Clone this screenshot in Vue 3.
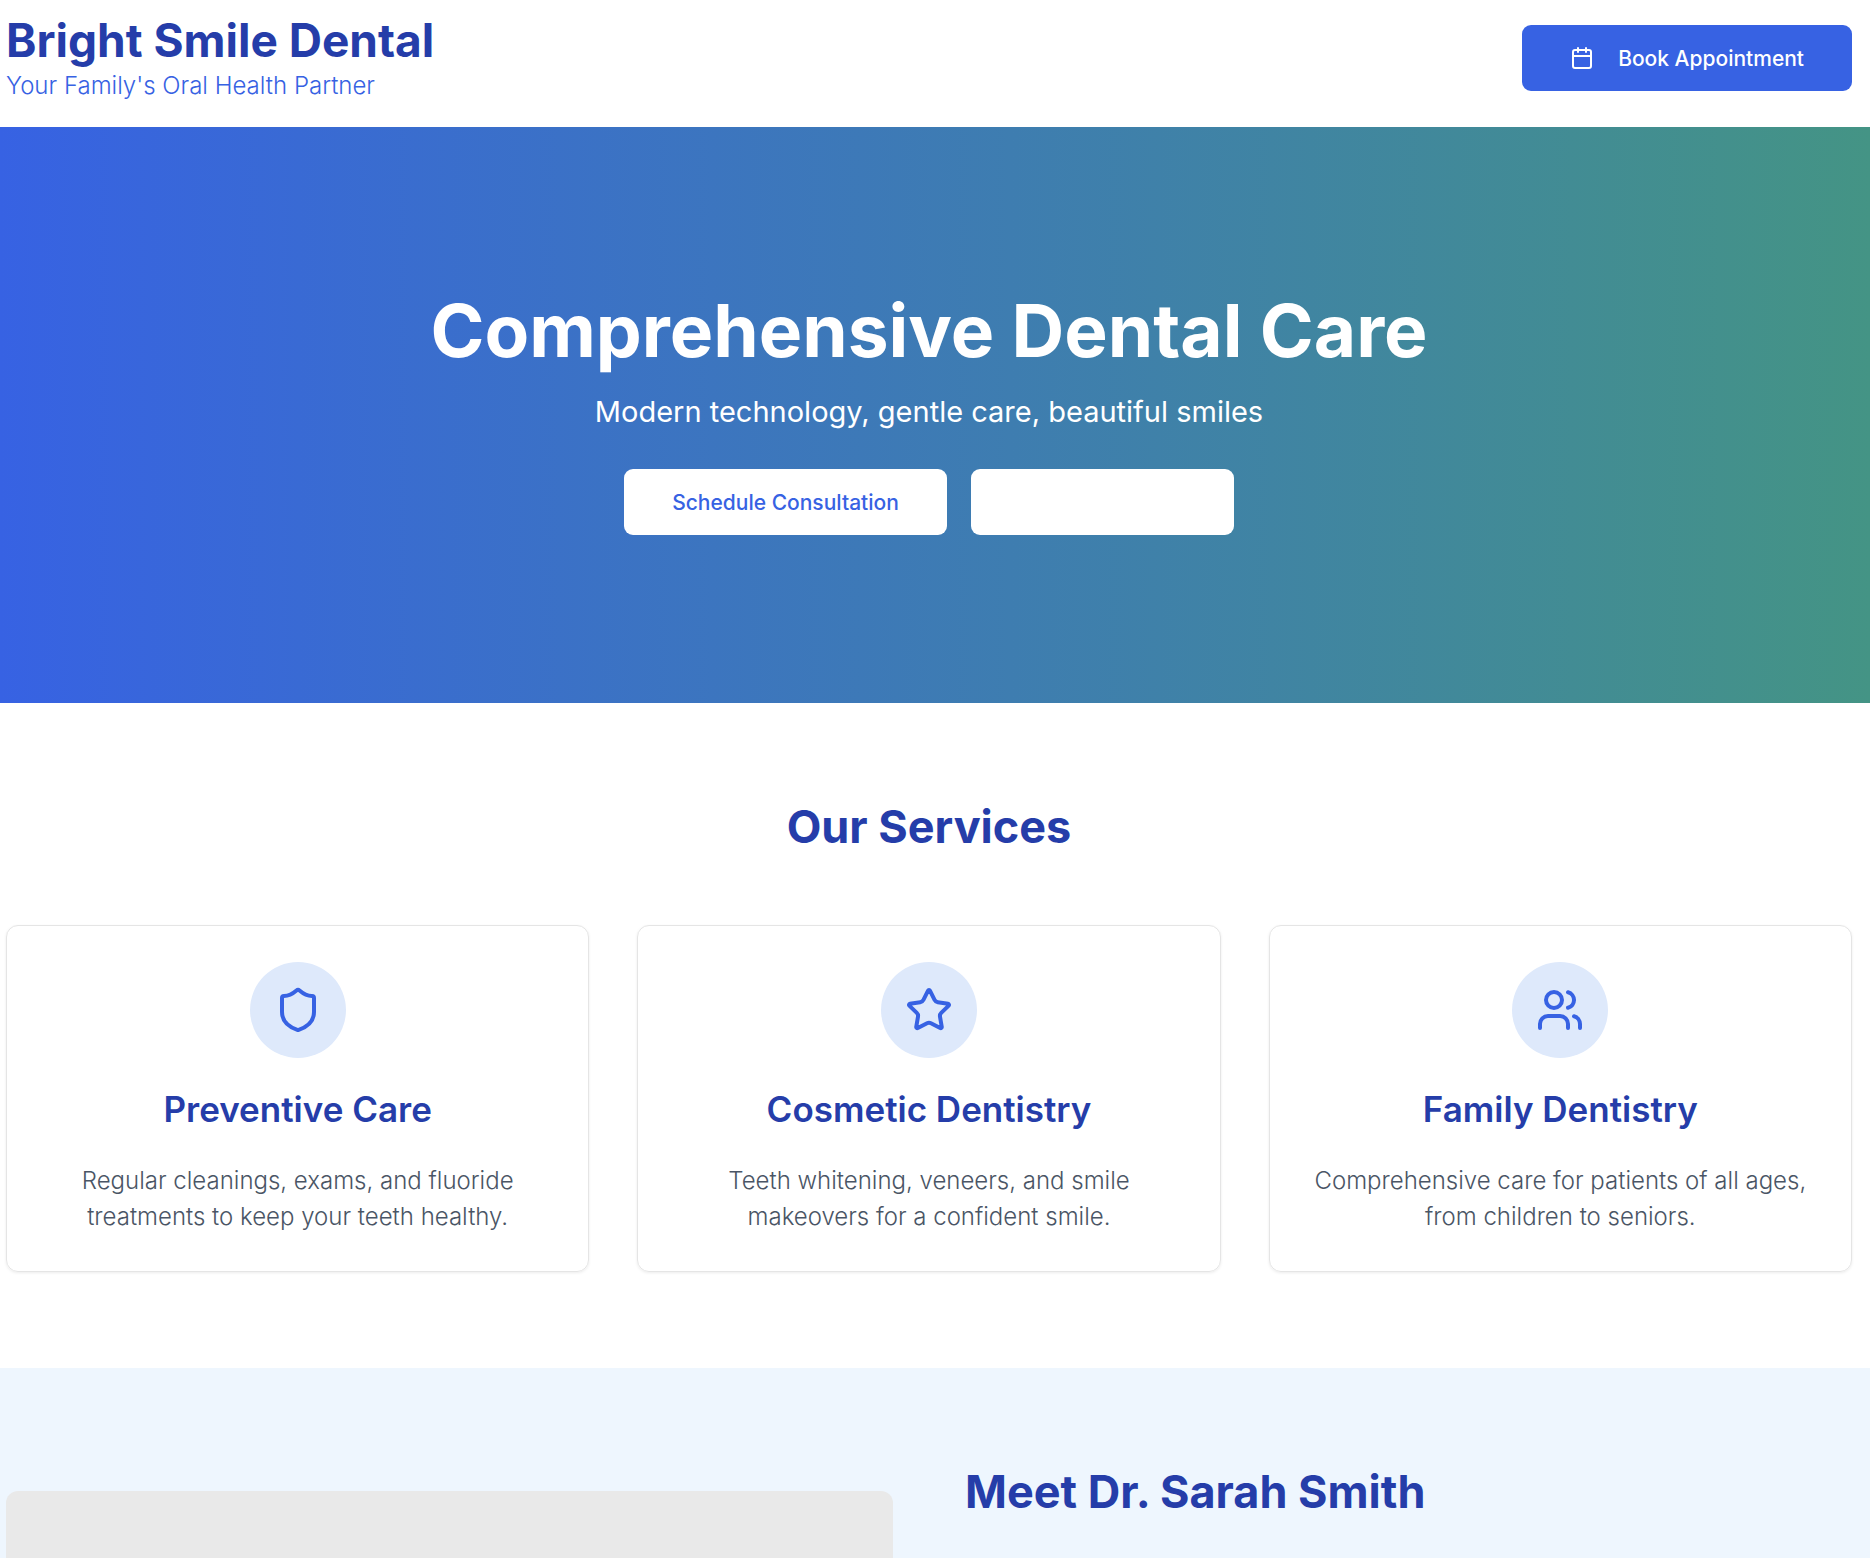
<script setup>
    import {ref} from 'vue';

    const services = ref([
        {
            icon: 'shield',
            title: 'Preventive Care',
            desc: 'Regular cleanings, exams, and fluoride treatments to keep your teeth healthy.'
        },
        {
            icon: 'star',
            title: 'Cosmetic Dentistry',
            desc: 'Teeth whitening, veneers, and smile makeovers for a confident smile.'
        },
        {
            icon: 'users',
            title: 'Family Dentistry',
            desc: 'Comprehensive care for patients of all ages, from children to seniors.'
        }
    ]);
</script>
<template>
    <div class="page">
        <header class="header wrap flex">
            <div class="brand">
                <h1 class="heading">Bright Smile Dental</h1>
                <p>Your Family's Oral Health Partner</p>
            </div>
            <button class="btn btn-primary flex center">
                <svg class="icon" width="24" height="24" viewBox="0 0 24 24" aria-hidden="true">
                    <path d="M8 2v4M16 2v4" />
                    <rect x="3" y="4" width="18" height="18" rx="2" />
                    <path d="M3 10h18" />
                </svg>
                Book Appointment
            </button>
        </header>
        <main>
            <section class="hero wrap flex center">
                <h2>Comprehensive Dental Care</h2>
                <p>Modern technology, gentle care, beautiful smiles</p>
                <div class="hero-buttons flex">
                    <button class="btn btn-white">Schedule Consultation</button>
                    <button class="btn btn-white btn-blank" aria-label="Call"></button>
                </div>
            </section>
            <section class="services wrap">
                <h2 class="heading">Our Services</h2>
                <div class="cards">
                    <article v-for="service in services" :key="service.title" class="card">
                        <div class="card-icon flex center">
                            <svg class="icon" width="48" height="48" viewBox="0 0 24 24" aria-hidden="true">
                                <path v-if="service.icon === 'shield'" d="M20 13c0 5-3.5 7.5-7.66 8.95a1 1 0 0 1-.67-.01C7.5 20.5 4 18 4 13V6a1 1 0 0 1 1-1c2 0 4.5-1.2 6.24-2.72a1.17 1.17 0 0 1 1.52 0C14.51 3.81 17 5 19 5a1 1 0 0 1 1 1z" />
                                <path v-else-if="service.icon === 'star'" d="M11.525 2.295a.53.53 0 0 1 .95 0l2.31 4.679a2.123 2.123 0 0 0 1.595 1.16l5.166.756a.53.53 0 0 1 .294.904l-3.736 3.638a2.123 2.123 0 0 0-.611 1.878l.882 5.14a.53.53 0 0 1-.771.56l-4.618-2.428a2.122 2.122 0 0 0-1.973 0L6.396 21.01a.53.53 0 0 1-.77-.56l.881-5.139a2.122 2.122 0 0 0-.611-1.879L2.16 9.795a.53.53 0 0 1 .294-.906l5.165-.755a2.122 2.122 0 0 0 1.597-1.16z" />
                                <g v-else>
                                    <path d="M16 21v-2a4 4 0 0 0-4-4H6a4 4 0 0 0-4 4v2" />
                                    <circle cx="9" cy="7" r="4" />
                                    <path d="M22 21v-2a4 4 0 0 0-3-3.87M16 3.13a4 4 0 0 1 0 7.75" />
                                </g>
                            </svg>
                        </div>
                        <h3>{{ service.title }}</h3>
                        <p>{{ service.desc }}</p>
                    </article>
                </div>
            </section>
            <section class="doctor wrap">
                <div class="doctor-photo"></div>
                <div>
                    <h2 class="heading">Meet Dr. Sarah Smith</h2>
                </div>
            </section>
        </main>
    </div>
</template>
<style>
body {
    margin: 0;
}
</style>
<style scoped>
.page {
    font-family: "Inter", "Liberation Sans", sans-serif;
    font-size: 24px;
    line-height: 36px;
    color: #4a5565;
    background: #fff;
}

h1, h2, h3, p {
    margin: 0;
}

p {
    font-weight: 350;
}

.flex {
    display: flex;
}

.center {
    justify-content: center;
    align-items: center;
}

.wrap {
    padding-left: 6px;
    padding-right: 18px;
}

.heading {
    font-size: 45px;
    line-height: 56px;
    font-weight: 700;
    color: #253da9;
}

.icon {
    fill: none;
    stroke: currentColor;
    stroke-width: 2;
    stroke-linecap: round;
    stroke-linejoin: round;
    flex-shrink: 0;
}

.header {
    justify-content: space-between;
    align-items: center;
    padding-top: 12px;
    padding-bottom: 23px;
}

.brand .heading {
    font-size: 46px;
}

.brand p {
    color: #3762e3;
}

.btn {
    height: 66px;
    padding: 0 48px;
    border: none;
    border-radius: 9px;
    font-family: inherit;
    font-size: 21px;
    font-weight: 500;
    cursor: pointer;
}

.btn-primary {
    gap: 24px;
    color: #fff;
    background: #3762e3;
}

.btn-white {
    color: #3762e3;
    background: #fff;
}

.btn-blank {
    width: 263px;
}

.hero {
    flex-direction: column;
    min-height: 576px;
    text-align: center;
    color: #fff;
    background: linear-gradient(90deg, #3762e3, #449485);
}

.hero h2 {
    font-size: 73px;
    line-height: 72px;
    font-weight: 700;
}

.hero p {
    margin: 24px 0 36px;
    font-size: 29px;
    line-height: 42px;
    font-weight: 400;
}

.hero-buttons {
    gap: 24px;
}

.services {
    padding-top: 96px;
    padding-bottom: 96px;
    text-align: center;
}

.cards {
    display: grid;
    grid-template-columns: repeat(3, 1fr);
    gap: 48px;
    margin-top: 70px;
}

.card {
    padding: 36px;
    border: 1px solid #e5e5e5;
    border-radius: 12px;
    box-shadow: 0 1px 3px rgba(0, 0, 0, .08);
}

.card-icon {
    width: 96px;
    height: 96px;
    margin: 0 auto 24px;
    border-radius: 50%;
    color: #3762e3;
    background: #dee9fb;
}

.card h3 {
    margin-bottom: 27px;
    font-size: 35px;
    line-height: 54px;
    font-weight: 600;
    color: #253da9;
}

.doctor {
    display: grid;
    grid-template-columns: 1fr 1fr;
    gap: 72px;
    padding-top: 96px;
    padding-bottom: 96px;
    background: #eef6fe;
}

.doctor-photo {
    height: 480px;
    margin-top: 27px;
    border-radius: 12px;
    background: #e9e9e9;
}
</style>
